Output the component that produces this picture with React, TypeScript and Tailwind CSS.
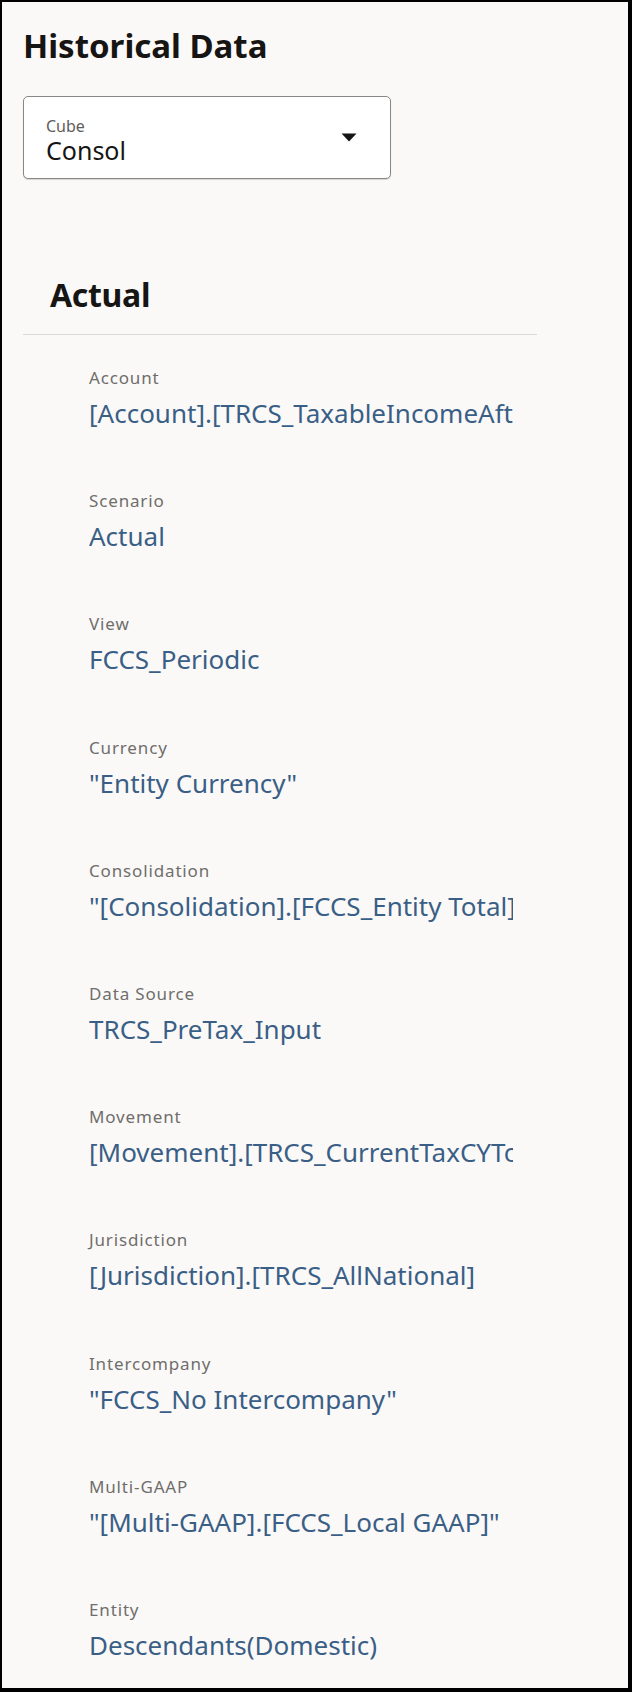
// Historical Data panel: cube picker on top, then the "Actual" member list.
const fields: { label: string; value: string }[] = [
  { label: "Account", value: "[Account].[TRCS_TaxableIncomeAft" },
  { label: "Scenario", value: "Actual" },
  { label: "View", value: "FCCS_Periodic" },
  { label: "Currency", value: '"Entity Currency"' },
  { label: "Consolidation", value: '"[Consolidation].[FCCS_Entity Total]' },
  { label: "Data Source", value: "TRCS_PreTax_Input" },
  { label: "Movement", value: "[Movement].[TRCS_CurrentTaxCYTo" },
  { label: "Jurisdiction", value: "[Jurisdiction].[TRCS_AllNational]" },
  { label: "Intercompany", value: '"FCCS_No Intercompany"' },
  { label: "Multi-GAAP", value: '"[Multi-GAAP].[FCCS_Local GAAP]"' },
  { label: "Entity", value: "Descendants(Domestic)" },
];

export default function App() {
  return (
    <div
      className="box-border h-[1692px] w-[632px] overflow-hidden border-t-2 border-r-4 border-b-4 border-l-2 border-black bg-[#fbf9f8] text-[#161513]"
      style={{ fontFamily: '"Noto Sans", "Open Sans", sans-serif' }}
    >
      <div className="px-[21px] pt-[24px]">
        <h1 className="text-[33px] leading-[40px] font-bold">Historical Data</h1>

        <div className="mt-[30px] flex h-[83px] w-[368px] items-start justify-between rounded-[5px] border border-[#8a8683] bg-white pt-[20px] pr-[33px] pl-[22px] shadow-[0_1px_1px_rgba(0,0,0,0.15)]">
          <div className="flex flex-col">
            <span className="text-[16px] leading-[19px] text-[#5f5d5a]">Cube</span>
            <span className="text-[25px] leading-[29px] text-[#161513]">Consol</span>
          </div>
          <svg width="16" height="9" viewBox="0 0 16 9" className="mt-[16px]">
            <path d="M0.5 0.5 H15.5 L8 8.5 Z" fill="#161513" />
          </svg>
        </div>

        <div className="mt-[96px] w-[514px]">
          <h2 className="pl-[27px] text-[32px] leading-[40px] font-bold tracking-[-0.01em]">Actual</h2>
          <div className="mt-[19px] h-px bg-[#dcdad7]" />
        </div>

        <div className="flex flex-col gap-[59.2px] pt-[31px] pl-[66px]">
          {fields.map((f) => (
            <div key={f.label} className="flex flex-col">
              <span className="text-[17px] leading-[24px] tracking-[0.05em] text-[#6f6e6b]">{f.label}</span>
              <span className="mt-[6px] w-[424px] overflow-hidden text-[26px] leading-[34px] whitespace-nowrap text-[#3a5f86]">
                {f.value}
              </span>
            </div>
          ))}
        </div>
      </div>
    </div>
  );
}
